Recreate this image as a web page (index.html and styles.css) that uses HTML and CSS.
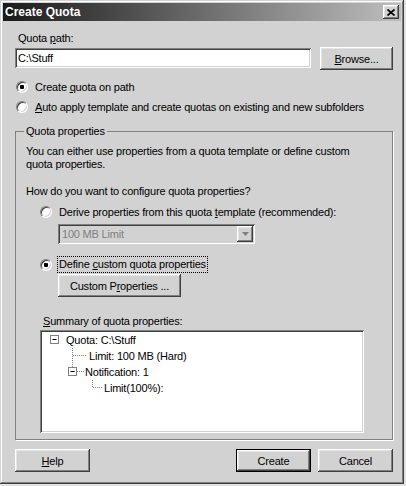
FILE: index.html
```html
<!DOCTYPE html>
<html>
<head>
<meta charset="utf-8">
<link rel="stylesheet" href="styles.css">
</head>
<body>
<div class="window">
  <div class="titlebar">
    <span class="title">Create Quota</span>
    <span class="close btn-bevel">
      <svg width="8" height="7" viewBox="0 0 8 7"><path d="M0.5 0.5 L7.5 6.5 M7.5 0.5 L0.5 6.5" stroke="#000" stroke-width="1.7" fill="none"/></svg>
    </span>
  </div>
  <div class="content">
    <div class="label path-label">Quota <u>p</u>ath:</div>
    <div class="path-row">
      <div class="field textbox">C:\Stuff</div>
      <div class="btn btn-bevel browse"><span><u>B</u>rowse...</span></div>
    </div>
    <div class="radio-row first"><span class="radio checked"></span><span>Create <u>q</u>uota on path</span></div>
    <div class="radio-row second"><span class="radio"></span><span><u>A</u>uto apply template and create quotas on existing and new subfolders</span></div>

    <fieldset class="group">
      <legend>Quota properties</legend>
      <p class="intro">You can either use properties from a quota template or define custom<br>quota properties.</p>
      <p class="question">How do you want to configure quota properties?</p>
      <div class="radio-row derive"><span class="radio"></span><span>Derive properties from this quota <u>t</u>emplate (recommended):</span></div>
      <div class="combo field">
        <span class="combo-text">100 MB Limit</span>
        <span class="combo-btn btn-bevel">
          <svg width="7" height="4" viewBox="0 0 7 4"><path d="M0 0 H7 L3.5 4 Z" fill="#808080"/></svg>
        </span>
      </div>
      <div class="radio-row define"><span class="radio checked"></span><span class="focus">Define <u>c</u>ustom quota properties</span></div>
      <div class="btn btn-bevel custom"><span>Custom P<u>r</u>operties ...</span></div>
      <div class="label summary-label"><u>S</u>ummary of quota properties:</div>
      <div class="tree field">
        <div class="tree-row">
          <svg class="gutter" width="24" height="16" viewBox="0 0 24 16">
            <rect x="8.5" y="3.5" width="8" height="8" fill="#fff" stroke="#808080"/>
            <path d="M10.5 7.5 H14.5" stroke="#000"/>
          </svg>
          <span>Quota: C:\Stuff</span>
        </div>
        <div class="tree-row">
          <svg class="gutter" width="47" height="16" viewBox="0 0 47 16">
            <path d="M30.5 0 V16 M31 7.5 H44" stroke="#808080" stroke-dasharray="1 1" fill="none"/>
          </svg>
          <span>Limit: 100 MB (Hard)</span>
        </div>
        <div class="tree-row">
          <svg class="gutter" width="43" height="16" viewBox="0 0 43 16">
            <path d="M30.5 0 V3 M35 7.5 H42" stroke="#808080" stroke-dasharray="1 1" fill="none"/>
            <rect x="26.5" y="3.5" width="8" height="8" fill="#fff" stroke="#808080"/>
            <path d="M28.5 7.5 H32.5" stroke="#000"/>
          </svg>
          <span>Notification: 1</span>
        </div>
        <div class="tree-row">
          <svg class="gutter" width="62" height="16" viewBox="0 0 62 16">
            <path d="M50.5 0 V8 M51 7.5 H60" stroke="#808080" stroke-dasharray="1 1" fill="none"/>
          </svg>
          <span>Limit(100%):</span>
        </div>
      </div>
    </fieldset>

    <div class="footer">
      <div class="btn btn-bevel"><span><u>H</u>elp</span></div>
      <div class="spacer"></div>
      <div class="btn btn-bevel default"><span>Create</span></div>
      <div class="btn btn-bevel"><span>Cancel</span></div>
    </div>
  </div>
</div>
</body>
</html>
```

FILE: styles.css
```css
* { box-sizing: border-box; }
html, body { margin: 0; padding: 0; }
body {
  width: 406px;
  height: 486px;
  overflow: hidden;
  background: #e2e2e2;
  font-family: "Liberation Sans", Arial, sans-serif;
  font-size: 11px;
  letter-spacing: -0.2px;
  color: #000;
}
u { text-decoration: underline; text-underline-offset: 1px; }

.window {
  width: 404px;
  height: 484px;
  background: #d2d2d2;
  padding: 3px;
  display: flex;
  flex-direction: column;
  box-shadow: inset -1px -1px #404040, inset 1px 1px #d2d2d2, inset -2px -2px #808080, inset 2px 2px #fff;
}

.titlebar {
  height: 18px;
  background: linear-gradient(to right, #1a1a1a, #bebebe);
  display: flex;
  align-items: center;
  justify-content: space-between;
  padding: 0 2px;
}
.title {
  color: #fff;
  font-weight: bold;
  font-size: 12px;
  letter-spacing: 0;
}

.btn-bevel {
  background: #d2d2d2;
  box-shadow: inset -1px -1px #404040, inset 1px 1px #fff, inset -2px -2px #808080, inset 2px 2px #e4e4e4;
}
.close {
  width: 16px;
  height: 14px;
  display: flex;
  align-items: center;
  justify-content: center;
}

.content {
  flex: 1;
  padding: 11px 8px 0 12px;
  display: flex;
  flex-direction: column;
}

.label { line-height: 13px; }
.path-label { margin-left: 3px; }

.field {
  background: #fff;
  box-shadow: inset 1px 1px #808080, inset -1px -1px #fff, inset 2px 2px #404040, inset -2px -2px #d2d2d2;
}

.path-row {
  display: flex;
  gap: 9px;
  margin-top: 2px;
}
.textbox {
  flex: 1;
  height: 20px;
  margin-top: 1px;
  padding: 0 3px;
  line-height: 20px;
}
.btn {
  height: 23px;
  width: 75px;
  display: flex;
  align-items: center;
  justify-content: center;
}
.browse { width: 73px; }

.radio-row {
  display: flex;
  align-items: center;
  height: 17px;
  gap: 7px;
}
.radio-row.first { margin-top: 8px; margin-left: 1px; }
.radio-row.second { margin-top: 3px; margin-left: 1px; }
.radio {
  width: 12px;
  height: 12px;
  flex: none;
  border-radius: 50%;
  background: #fff;
  border: 1px solid;
  border-color: #808080 #fff #fff #808080;
  box-shadow: inset 1px 1px #404040, inset -1px -1px #d2d2d2;
}
.radio.checked {
  background: radial-gradient(circle at 50% 50%, #000 0 2px, #fff 2.5px);
}

.group {
  margin: 10px 0 0 0;
  padding: 0 10px 6px 10px;
  border: 1px solid #808080;
  box-shadow: 1px 1px 0 #fff;
  min-width: 0;
}
.group legend {
  padding: 0 2px;
  margin-left: -2px;
  line-height: 13px;
}
.intro {
  margin: 7px 0 0 0;
  line-height: 13px;
}
.question {
  margin: 14px 0 0 0;
  line-height: 13px;
}
.radio-row.derive { margin-top: 5px; margin-left: 14px; }
.combo {
  margin: 4px 0 0 32px;
  width: 197px;
  height: 20px;
  background: #d2d2d2;
  display: flex;
  align-items: center;
  justify-content: space-between;
  padding: 2px;
}
.combo-text { color: #808080; padding-left: 2px; }
.combo-btn {
  width: 16px;
  height: 16px;
  display: flex;
  align-items: center;
  justify-content: center;
}
.radio-row.define { margin-top: 12px; margin-left: 14px; gap: 5px; }
.focus {
  outline: 1px dotted #000;
  outline-offset: -1px;
  padding: 0 2px;
  line-height: 17px;
}
.custom {
  margin: 1px 0 0 32px;
  width: 123px;
}
.summary-label { margin: 18px 0 0 17px; }
.tree {
  margin: 2px 0 0 14px;
  width: 324px;
  height: 103px;
  padding: 2px;
}
.tree-row {
  display: flex;
  align-items: center;
  height: 16px;
  line-height: 16px;
}
.gutter { flex: none; display: block; }

.footer {
  display: flex;
  margin-top: 9px;
  gap: 7px;
}
.spacer { flex: 1; }
.default {
  box-shadow: inset 0 0 0 1px #000, inset -2px -2px #404040, inset 2px 2px #fff, inset -3px -3px #808080, inset 3px 3px #e4e4e4;
}
```
